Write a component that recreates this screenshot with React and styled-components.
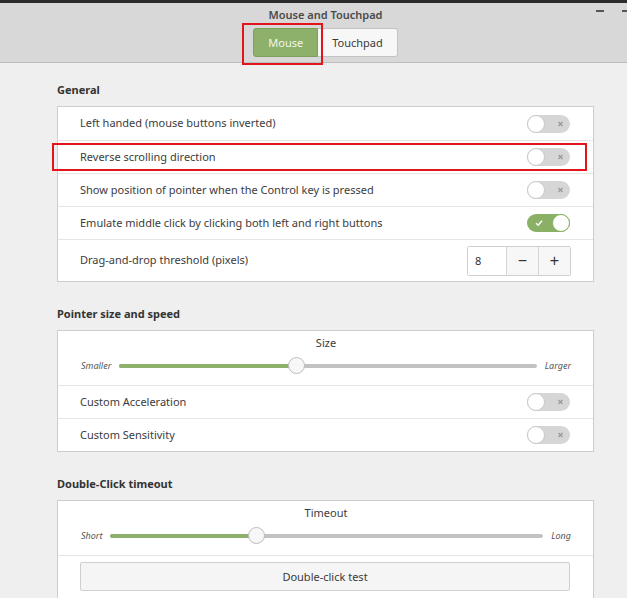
import React, { useState } from 'react';
import styled, { createGlobalStyle } from 'styled-components';

const GlobalStyle = createGlobalStyle`
    html, body {
        margin: 0;
        padding: 0;
        background: #efefef;
        overflow: hidden;
    }
    body {
        font-family: "Noto Sans", "Open Sans", sans-serif;
        font-size: 11px;
        color: #3c3c3c;
    }
`;

// the window is wider than the screenshot, its right edge is cut off
const Window = styled.div`
    width: 651px;
    height: 598px;
    overflow: hidden;
    background: #efefef;
`;

const TopStrip = styled.div`
    height: 3px;
    background: #2b2b2b;
`;

const HeaderBar = styled.div`
    height: 59px;
    background: #d8d8d8;
    border-bottom: 1px solid #bdbdbd;
    display: flex;
    flex-direction: column;
    align-items: center;
`;

const TitleRow = styled.div`
    width: 100%;
    display: grid;
    grid-template-columns: 1fr auto 1fr;
    align-items: center;
    height: 22px;
`;

const Title = styled.div`
    grid-column: 2;
    font-weight: 600;
    font-size: 11px;
    color: #4a4a4a;
`;

const Controls = styled.div`
    grid-column: 3;
    justify-self: end;
    display: flex;
    gap: 18px;
    padding-right: 21px;
`;

const WinButton = styled.span`
    width: 8px;
    height: 2px;
    background: #555;
    margin-top: -4px;
`;

const Switcher = styled.div`
    position: relative;
    display: flex;
    margin-top: 3px;
`;

const SwitchButton = styled.button`
    height: 29px;
    padding: 0 14px;
    font-family: inherit;
    font-size: 11px;
    border: 1px solid ${p => (p.$active ? '#7f9e5c' : '#c4c4c4')};
    background: ${p => (p.$active ? '#8db06a' : '#f7f7f7')};
    color: ${p => (p.$active ? '#f2f7ea' : '#3a3a3a')};
    border-radius: ${p => (p.$first ? '3px 0 0 3px' : '0 3px 3px 0')};
    border-left-width: ${p => (p.$first ? '1px' : '0')};
    cursor: pointer;
`;

const Highlight = styled.div`
    position: absolute;
    border: 2px solid #e3141b;
    pointer-events: none;
    top: ${p => p.$top}px;
    left: ${p => p.$left}px;
    width: ${p => p.$width}px;
    height: ${p => p.$height}px;
`;

const Content = styled.div`
    padding: 19px 57px 0 57px;
`;

const SectionTitle = styled.div`
    font-weight: 700;
    font-size: 11px;
    line-height: 16px;
    color: #333;
    margin-bottom: 8px;
    margin-top: ${p => (p.$first ? '0' : '24px')};
`;

const Panel = styled.div`
    background: #fff;
    border: 1px solid #cdcdcd;
`;

const Row = styled.div`
    position: relative;
    display: flex;
    align-items: center;
    justify-content: space-between;
    height: ${p => p.$h || 33}px;
    padding: 0 23px 0 22px;
    border-top: ${p => (p.$first ? 'none' : '1px solid #e6e6e6')};
    box-sizing: border-box;
`;

const Label = styled.span`
    color: #3c3c3c;
    margin-top: -2px;
`;

const Track = styled.button`
    position: relative;
    width: 43px;
    height: 18px;
    border-radius: 9px;
    border: none;
    padding: 0;
    background: ${p => (p.$on ? '#8ab065' : '#d6d6d6')};
    cursor: pointer;
`;

const Knob = styled.span`
    position: absolute;
    top: 0;
    left: ${p => (p.$on ? '25px' : '0')};
    width: 16px;
    height: 16px;
    border-radius: 50%;
    background: #fff;
    border: 1px solid ${p => (p.$on ? '#8ab065' : '#c9c9c9')};
`;

const Mark = styled.svg`
    position: absolute;
    top: 5px;
    left: ${p => (p.$on ? '8px' : '30px')};
`;

const Toggle = ({ on }) => {
    const [value, setValue] = useState(on);
    return (
        <Track $on={value} onClick={() => setValue(!value)}>
            {value ? (
                <Mark $on width="8" height="8" viewBox="0 0 8 8">
                    <path d="M1 4.2 L3.2 6.2 L7 1.8" stroke="#fff" strokeWidth="1.5" fill="none" />
                </Mark>
            ) : (
                <Mark width="7" height="8" viewBox="0 0 7 8">
                    <path d="M1.5 2 L5.5 6 M5.5 2 L1.5 6" stroke="#999" strokeWidth="1.3" fill="none" />
                </Mark>
            )}
            <Knob $on={value} />
        </Track>
    );
};

const Spin = styled.div`
    display: flex;
    height: 28px;
    border: 1px solid #cfcfcf;
    border-radius: 2px;
    margin-right: -1px;
`;

const SpinInput = styled.input`
    width: 31px;
    border: none;
    padding: 0 0 0 7px;
    font-family: inherit;
    font-size: 11px;
    color: #333;
    outline: none;
`;

const SpinButton = styled.button`
    width: 32px;
    border: none;
    border-left: 1px solid #d6d6d6;
    background: #f7f7f7;
    font-size: 16px;
    color: #333;
    padding: 0;
    cursor: pointer;
    display: flex;
    align-items: center;
    justify-content: center;
`;

const SliderBlock = styled.div`
    display: flex;
    flex-direction: column;
    height: 54px;
    padding: 5px 22px 0 23px;
    box-sizing: border-box;
`;

const SliderTitle = styled.div`
    text-align: center;
    line-height: 14px;
    color: #3c3c3c;
`;

const SliderLine = styled.div`
    display: flex;
    align-items: center;
    gap: 8px;
    margin-top: 9px;
`;

const EndLabel = styled.span`
    font-style: italic;
    font-size: 9px;
    color: #555;
`;

const Rail = styled.div`
    position: relative;
    flex: 1;
    height: 4px;
    border-radius: 2px;
    background: #c2c2c2;
`;

const Fill = styled.div`
    height: 100%;
    border-radius: 2px;
    background: #8db06a;
`;

const Thumb = styled.div`
    position: absolute;
    top: -7px;
    width: 15px;
    height: 15px;
    margin-left: -8px;
    border-radius: 50%;
    background: #f7f7f7;
    border: 1px solid #bdbdbd;
`;

const Slider = ({ title, min, max, value }) => (
    <SliderBlock>
        <SliderTitle>{title}</SliderTitle>
        <SliderLine>
            <EndLabel>{min}</EndLabel>
            <Rail>
                <Fill style={{ width: `${value * 100}%` }} />
                <Thumb style={{ left: `${value * 100}%` }} />
            </Rail>
            <EndLabel>{max}</EndLabel>
        </SliderLine>
    </SliderBlock>
);

const TestRow = styled.div`
    border-top: 1px solid #e6e6e6;
    padding: 6px 23px 8px 22px;
`;

const TestButton = styled.button`
    width: 100%;
    height: 29px;
    background: #f5f5f5;
    border: 1px solid #cfcfcf;
    border-radius: 2px;
    font-family: inherit;
    font-size: 11px;
    color: #3a3a3a;
    padding-bottom: 2px;
`;

const App = () => {
    const [tab, setTab] = useState('mouse');
    const [threshold, setThreshold] = useState(8);

    return (
        <Window>
            <GlobalStyle />
            <TopStrip />
            <HeaderBar>
                <TitleRow>
                    <Title>Mouse and Touchpad</Title>
                    <Controls>
                        <WinButton />
                        <WinButton />
                    </Controls>
                </TitleRow>
                <Switcher>
                    <SwitchButton $first $active={tab === 'mouse'} onClick={() => setTab('mouse')}>
                        Mouse
                    </SwitchButton>
                    <SwitchButton $active={tab === 'touchpad'} onClick={() => setTab('touchpad')}>
                        Touchpad
                    </SwitchButton>
                    <Highlight $top={-5} $left={-11} $width={77} $height={38} />
                </Switcher>
            </HeaderBar>
            <Content>
                <SectionTitle $first>General</SectionTitle>
                <Panel>
                    <Row $first>
                        <Label>Left handed (mouse buttons inverted)</Label>
                        <Toggle on={false} />
                    </Row>
                    <Row>
                        <Label>Reverse scrolling direction</Label>
                        <Toggle on={false} />
                        <Highlight $top={2} $left={-6} $width={531} $height={24} />
                    </Row>
                    <Row>
                        <Label>Show position of pointer when the Control key is pressed</Label>
                        <Toggle on={false} />
                    </Row>
                    <Row>
                        <Label>Emulate middle click by clicking both left and right buttons</Label>
                        <Toggle on />
                    </Row>
                    <Row $h={42}>
                        <Label>Drag-and-drop threshold (pixels)</Label>
                        <Spin>
                            <SpinInput
                                value={threshold}
                                onChange={(e) => setThreshold(e.target.value)}
                            />
                            <SpinButton onClick={() => setThreshold(Number(threshold) - 1)}>−</SpinButton>
                            <SpinButton onClick={() => setThreshold(Number(threshold) + 1)}>+</SpinButton>
                        </Spin>
                    </Row>
                </Panel>

                <SectionTitle>Pointer size and speed</SectionTitle>
                <Panel>
                    <Slider title="Size" min="Smaller" max="Larger" value={0.423} />
                    <Row>
                        <Label>Custom Acceleration</Label>
                        <Toggle on={false} />
                    </Row>
                    <Row>
                        <Label>Custom Sensitivity</Label>
                        <Toggle on={false} />
                    </Row>
                </Panel>

                <SectionTitle>Double-Click timeout</SectionTitle>
                <Panel>
                    <Slider title="Timeout" min="Short" max="Long" value={0.337} />
                    <TestRow>
                        <TestButton>Double-click test</TestButton>
                    </TestRow>
                </Panel>
            </Content>
        </Window>
    );
};

export default App;
